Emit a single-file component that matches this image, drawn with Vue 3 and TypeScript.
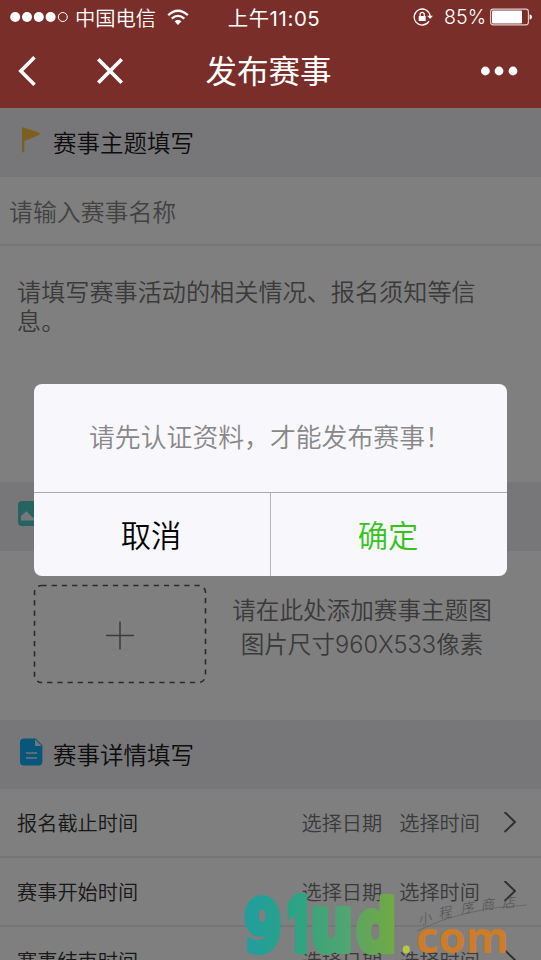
<script setup lang="ts">
interface TimeRow { label: string }
interface Glyph { char: string; id: string; x: number; scale: number; size: number; face: string; from: string; to: string }

const rows: TimeRow[] = [
  { label: '报名截止时间' },
  { label: '赛事开始时间' },
  { label: '赛事结束时间' },
]

const brand: Glyph[] = [
  { char: '9', id: 'brand-nine', x: 4, scale: 0.76, size: 72, face: 'wide', from: '#229d9f', to: '#27a28b' },
  { char: '1', id: 'brand-one', x: 47.5, scale: 0.58, size: 76, face: 'plain', from: '#28a387', to: '#31a47f' },
  { char: 'u', id: 'brand-u', x: 70.3, scale: 0.8, size: 76, face: 'wide', from: '#3aa47b', to: '#54a66d' },
  { char: 'd', id: 'brand-d', x: 116, scale: 0.79, size: 72, face: 'wide', from: '#5ca660', to: '#72a943' },
]
</script>

<template>
  <div class="screen">
    <header class="top">
      <div class="status">
        <div class="carrier">
          <svg class="signal" width="58" height="12" viewBox="0 0 58 12">
            <g fill="#fff">
              <circle v-for="n in 4" :key="n" :cx="n * 11.8 - 6.6" cy="6" r="5" />
            </g>
            <circle cx="52.8" cy="6" r="4.5" fill="none" stroke="#fff" />
          </svg>
          <span>中国电信</span>
          <svg class="wifi" width="22" height="17" viewBox="0 0 22 17">
            <g fill="none" stroke="#fff" stroke-width="2.3">
              <path d="M1.2 6.1Q11-2.7 20.8 6.1" />
              <path d="M4.7 9.7Q11 4.1 17.3 9.7" />
            </g>
            <path d="M7.5 12.3Q11 9.2 14.5 12.3L11 16Z" fill="#fff" />
          </svg>
        </div>
        <div class="clock">上午11:05</div>
        <div class="power">
          <svg width="20" height="18" viewBox="0 0 20 18">
            <path d="M16 13.2A8 8 0 1 1 17.1 8" fill="none" stroke="#fff" stroke-width="1.3" />
            <path d="M14.2 7.7H19.9L17.1 11Z" fill="#fff" />
            <rect x="5.7" y="8" width="7" height="5" fill="#fff" />
            <path d="M7.1 8V6.5A2.1 2.1 0 0 1 11.3 6.5V8" fill="none" stroke="#fff" stroke-width="1.2" />
          </svg>
          <span>85%</span>
          <svg width="43" height="18" viewBox="0 0 43 18">
            <rect x=".6" y="1.1" width="37.8" height="15.8" rx="2.6" fill="none" stroke="#e2cfcd" stroke-width="1.1" />
            <rect x="2" y="2.6" width="30" height="12.8" rx="1" fill="#fff" />
            <path d="M39.6 6.2Q42 6.8 42 9T39.6 11.8Z" fill="#fff" />
          </svg>
        </div>
      </div>
      <nav class="nav">
        <div class="nav-left">
          <svg width="20" height="32" viewBox="0 0 20 32">
            <path d="M16.5 2.3L2.8 16L16.5 29.7" fill="none" stroke="#fff" stroke-width="3.6" />
          </svg>
          <svg width="28" height="28" viewBox="0 0 28 28">
            <path d="M2.3 2.3L25.7 25.7M25.7 2.3L2.3 25.7" stroke="#fff" stroke-width="3.7" />
          </svg>
        </div>
        <h1>发布赛事</h1>
        <svg class="more" width="38" height="10" viewBox="0 0 38 10">
          <g fill="#fff"><circle cx="4.4" cy="5" r="4.4" /><circle cx="18" cy="5" r="4.4" /><circle cx="32" cy="5" r="4.4" /></g>
        </svg>
      </nav>
    </header>

    <main>
      <h2 class="section">
        <svg width="24" height="28" viewBox="0 0 24 28">
          <path d="M2 1.9Q2 1 3.5 1.4L18.7 6.5Q21 7.6 19 9L4.4 14.9V25.5Q3.2 27.8 2 25.5Z" fill="#f7bf3d" />
        </svg>
        <span>赛事主题填写</span>
      </h2>
      <div class="name-field">请输入赛事名称</div>
      <div class="details">请填写赛事活动的相关情况、报名须知等信息。</div>
      <h2 class="section photo">
        <svg width="30" height="26" viewBox="0 0 30 26">
          <rect width="30" height="25" rx="4" fill="#4bc9c0" />
          <path d="M3 19.5V15L8.5 10.2L15 17L20 12L27 19.5Z" fill="#eeeef3" />
        </svg>
        <span>赛事主题图片</span>
      </h2>
      <div class="upload">
        <svg width="174" height="100" viewBox="0 0 174 100">
          <rect x="1.5" y="1.5" width="171" height="97" rx="7" fill="none" stroke="#555" stroke-width="1.6" stroke-dasharray="5.2 5" />
          <path d="M73 51.5H101M87 37.5V65.5" stroke="#777" stroke-width="1.5" />
        </svg>
        <p>请在此处添加赛事主题图<br>图片尺寸960X533像素</p>
      </div>
      <h2 class="section form">
        <svg width="24" height="28" viewBox="0 0 24 28">
          <path d="M4 .5H15.7L22.4 7.2V23.6Q22.4 27.5 18.5 27.5H4Q0 27.5 0 23.6V4.4Q0 .5 4 .5Z" fill="#10aef5" />
          <path d="M15.7 3V7.2H20ZM6 15H17M6 20H17" fill="#dceef6" stroke="#dceef6" stroke-width="1.4" />
        </svg>
        <span>赛事详情填写</span>
      </h2>
      <div v-for="row in rows" :key="row.label" class="row">
        <span class="label">{{ row.label }}</span>
        <span class="pick">选择日期</span>
        <span class="pick">选择时间</span>
        <svg width="14" height="24" viewBox="0 0 14 24">
          <path d="M1.5 0L12 10L1.5 20" fill="none" stroke="#606060" stroke-width="2" />
        </svg>
      </div>
    </main>

    <div class="mask">
      <div class="dialog">
        <div class="message">请先认证资料，才能发布赛事！</div>
        <div class="actions">
          <button type="button">取消</button>
          <button type="button" class="confirm">确定</button>
        </div>
      </div>
    </div>

    <svg class="watermark" width="301" height="75" viewBox="0 0 301 75">
      <defs>
        <linearGradient v-for="g in brand" :id="g.id" :key="g.id">
          <stop offset="0" :stop-color="g.from" /><stop offset="1" :stop-color="g.to" />
        </linearGradient>
      </defs>
      <g stroke-width="6" stroke-linejoin="round">
        <text v-for="g in brand" :key="g.char" :class="g.face" :font-size="g.size" :fill="`url(#${g.id})`" :stroke="`url(#${g.id})`" :transform="`translate(${g.x} 65.5) scale(${g.scale} 1)`">{{ g.char }}</text>
      </g>
      <ellipse cx="166.3" cy="64.5" rx="3.6" ry="4" fill="#b6c846" />
      <text class="com" x="176" y="67.5" font-size="43" textLength="93" lengthAdjust="spacingAndGlyphs">com</text>
      <path d="M177 46Q222 23 287 20" fill="none" stroke="#696969" stroke-width="1" />
      <g class="script">
        <text x="179" y="40" transform="rotate(-14 179 40)">小</text>
        <text x="199" y="34" transform="rotate(-12 199 34)">程</text>
        <text x="221" y="29" transform="rotate(-9 221 29)">序</text>
        <text x="241" y="25" transform="rotate(-6 241 25)">商</text>
        <text x="262" y="23" transform="rotate(-5 262 23)">店</text>
      </g>
    </svg>
  </div>
</template>

<style>
body { margin: 0; overflow: hidden; }
</style>

<style scoped>
.screen { position: relative; height: 960px; overflow: hidden; background: #fff; font-family: Inter, "Noto Sans CJK SC", sans-serif; font-weight: 350; box-sizing: border-box; }
.top { position: relative; z-index: 2; height: 108px; background: #792e2a; color: #fff; }
.status { height: 34px; display: grid; grid-template-columns: 1fr auto 1fr; align-items: center; padding: 0 8px 0 10px; font-size: 20.3px; }
.carrier, .power { display: flex; align-items: center; }
.carrier span { margin-left: 7px; }
.wifi { margin-left: 11px; }
.clock { padding-left: 5px; font-size: 20.4px; font-weight: 400; letter-spacing: .6px; }
.power { justify-content: flex-end; }
.power span { margin: 0 4px 0 11px; font-size: 19.6px; }
.nav { height: 73px; display: grid; grid-template-columns: 1fr auto 1fr; align-items: center; padding: 0 22px 0 18px; }
.nav-left { display: flex; align-items: center; gap: 58px; }
h1 { margin: 0; padding-top: 2px; font-size: 31.5px; line-height: 71px; font-weight: 400; }
.more { justify-self: end; }
.section { margin: 0; height: 69px; box-sizing: border-box; padding-left: 20px; display: flex; align-items: center; background: #eeeef3; color: #181818; font-size: 23.5px; font-weight: 350; }
.section span { margin-left: 9px; padding-bottom: 2px; }
.section svg { position: relative; top: -3px; }
.section.photo { padding-left: 18px; }
.name-field { height: 69px; box-sizing: border-box; border-bottom: 2px solid #ececf0; padding-left: 9px; color: #858585; font-size: 23.9px; line-height: 71px; }
.details { height: 236px; box-sizing: border-box; padding: 32px 50px 0 17px; color: #747474; font-size: 24.15px; line-height: 29px; }
.upload { height: 169px; box-sizing: border-box; display: flex; padding: 33px 0 0 33px; }
.upload p { margin: 10px 0 0 20px; width: 270px; text-align: center; color: #747474; font-size: 23.6px; line-height: 34px; }
.row { height: 69px; box-sizing: border-box; border-bottom: 2px solid #ececf0; display: flex; align-items: center; padding: 2px 24px 0 17px; font-size: 20.2px; line-height: 30px; }
.label { flex: 1; color: #303030; }
.pick { color: #747474; margin-right: 17px; }
.row svg { margin-left: 7px; }
.row .pick:nth-of-type(3) { margin-right: 16px; }
.mask { position: absolute; inset: 0; z-index: 1; display: flex; align-items: center; justify-content: center; background: rgba(0, 0, 0, .5); }
.dialog { width: 473px; height: 192px; border-radius: 8px; overflow: hidden; background: #f8f7fb; display: flex; flex-direction: column; }
.message { flex: 1; padding-left: 55px; line-height: 108px; font-size: 25.85px; color: #888; white-space: nowrap; }
.actions { height: 85px; box-sizing: border-box; border-top: 1px solid #aaa9ac; display: flex; }
button { flex: 1; border: 0; padding: 0 2px 2px 0; background: none; font: inherit; font-weight: 350; font-size: 30.3px; color: #000; }
.confirm { border-left: 1px solid #b5b4b8; color: #35c41d; }
.watermark { position: absolute; left: 240px; top: 885px; z-index: 3; }
.wide { font-family: "DejaVu Sans", sans-serif; font-weight: 700; }
.plain { font-family: Inter, sans-serif; font-weight: 900; }
.com { fill: #cd7c29; font-family: "Open Sans", sans-serif; font-weight: 700; }
.script { fill: #505050; font-family: "Noto Sans CJK SC", sans-serif; font-size: 13.5px; font-weight: 300; font-style: italic; }
</style>
